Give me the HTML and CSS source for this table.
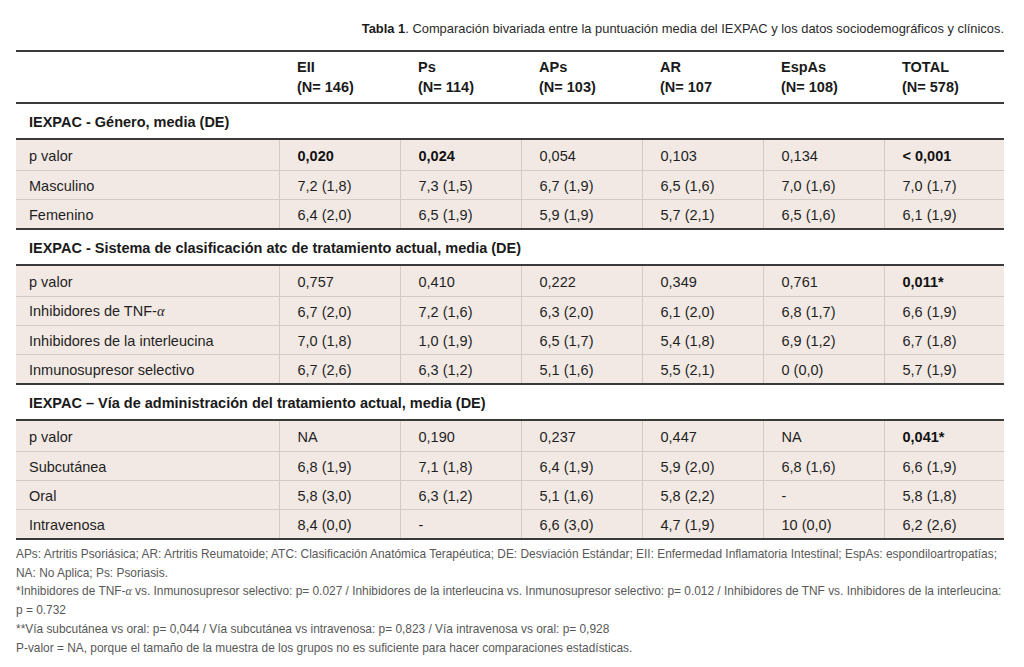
FILE: index.html
```html
<!DOCTYPE html>
<html lang="es">
<head>
<meta charset="utf-8">
<title>Tabla 1</title>
<link rel="stylesheet" href="styles.css">
</head>
<body>
<div class="page">
  <p class="caption"><b>Tabla 1</b>. Comparación bivariada entre la puntuación media del IEXPAC y los datos sociodemográficos y clínicos.</p>
  <table class="data">
    <colgroup>
      <col class="c-label">
      <col class="c-val"><col class="c-val"><col class="c-val"><col class="c-val"><col class="c-val"><col class="c-last">
    </colgroup>
    <thead>
      <tr>
        <th></th>
        <th>EII<br>(N= 146)</th>
        <th>Ps<br>(N= 114)</th>
        <th>APs<br>(N= 103)</th>
        <th>AR<br>(N= 107</th>
        <th>EspAs<br>(N= 108)</th>
        <th>TOTAL<br>(N= 578)</th>
      </tr>
    </thead>
    <tbody class="title">
      <tr><td colspan="7">IEXPAC - Género, media (DE)</td></tr>
    </tbody>
    <tbody class="block">
      <tr class="first"><td>p valor</td><td><b>0,020</b></td><td><b>0,024</b></td><td>0,054</td><td>0,103</td><td>0,134</td><td><b>&lt; 0,001</b></td></tr>
      <tr><td>Masculino</td><td>7,2 (1,8)</td><td>7,3 (1,5)</td><td>6,7 (1,9)</td><td>6,5 (1,6)</td><td>7,0 (1,6)</td><td>7,0 (1,7)</td></tr>
      <tr><td>Femenino</td><td>6,4 (2,0)</td><td>6,5 (1,9)</td><td>5,9 (1,9)</td><td>5,7 (2,1)</td><td>6,5 (1,6)</td><td>6,1 (1,9)</td></tr>
    </tbody>
    <tbody class="title">
      <tr><td colspan="7">IEXPAC - Sistema de clasificación atc de tratamiento actual, media (DE)</td></tr>
    </tbody>
    <tbody class="block">
      <tr class="first"><td>p valor</td><td>0,757</td><td>0,410</td><td>0,222</td><td>0,349</td><td>0,761</td><td><b>0,011*</b></td></tr>
      <tr><td>Inhibidores de TNF-<span class="greek">α</span></td><td>6,7 (2,0)</td><td>7,2 (1,6)</td><td>6,3 (2,0)</td><td>6,1 (2,0)</td><td>6,8 (1,7)</td><td>6,6 (1,9)</td></tr>
      <tr><td>Inhibidores de la interleucina</td><td>7,0 (1,8)</td><td>1,0 (1,9)</td><td>6,5 (1,7)</td><td>5,4 (1,8)</td><td>6,9 (1,2)</td><td>6,7 (1,8)</td></tr>
      <tr><td>Inmunosupresor selectivo</td><td>6,7 (2,6)</td><td>6,3 (1,2)</td><td>5,1 (1,6)</td><td>5,5 (2,1)</td><td>0 (0,0)</td><td>5,7 (1,9)</td></tr>
    </tbody>
    <tbody class="title">
      <tr><td colspan="7">IEXPAC – Vía de administración del tratamiento actual, media (DE)</td></tr>
    </tbody>
    <tbody class="block">
      <tr class="first"><td>p valor</td><td>NA</td><td>0,190</td><td>0,237</td><td>0,447</td><td>NA</td><td><b>0,041*</b></td></tr>
      <tr><td>Subcutánea</td><td>6,8 (1,9)</td><td>7,1 (1,8)</td><td>6,4 (1,9)</td><td>5,9 (2,0)</td><td>6,8 (1,6)</td><td>6,6 (1,9)</td></tr>
      <tr><td>Oral</td><td>5,8 (3,0)</td><td>6,3 (1,2)</td><td>5,1 (1,6)</td><td>5,8 (2,2)</td><td>-</td><td>5,8 (1,8)</td></tr>
      <tr><td>Intravenosa</td><td>8,4 (0,0)</td><td>-</td><td>6,6 (3,0)</td><td>4,7 (1,9)</td><td>10 (0,0)</td><td>6,2 (2,6)</td></tr>
    </tbody>
  </table>
  <div class="notes">
    <p>APs: Artritis Psoriásica; AR: Artritis Reumatoide; ATC: Clasificación Anatómica Terapéutica; DE: Desviación Estándar; EII: Enfermedad Inflamatoria Intestinal; EspAs: espondiloartropatías;<br>NA: No Aplica; Ps: Psoriasis.</p>
    <p>*Inhibidores de TNF-<span class="greek">α</span> vs. Inmunosupresor selectivo: p= 0.027 / Inhibidores de la interleucina vs. Inmunosupresor selectivo: p= 0.012 / Inhibidores de TNF vs. Inhibidores de la interleucina:<br>p = 0.732</p>
    <p>**Vía subcutánea vs oral: p= 0,044 / Vía subcutánea vs intravenosa: p= 0,823 / Vía intravenosa vs oral: p= 0,928</p>
    <p>P-valor = NA, porque el tamaño de la muestra de los grupos no es suficiente para hacer comparaciones estadísticas.</p>
  </div>
</div>
</body>
</html>
```
FILE: styles.css
```css
html, body {
  margin: 0;
  padding: 0;
  background: #ffffff;
}

body {
  font-family: "Liberation Sans", Arial, sans-serif;
  color: #1f1f1f;
}

.page {
  width: 988px;
  padding: 20px 20px 0 16px;
}

.caption {
  margin: 0 0 12px 0;
  text-align: right;
  font-size: 12.9px;
  line-height: 18px;
  color: #2a2a2a;
}

.caption b {
  font-weight: bold;
  color: #1a1a1a;
}

.data {
  width: 988px;
  border-collapse: collapse;
  table-layout: fixed;
  font-size: 14.5px;
}

.c-label { width: 263px; }
.c-val { width: 121px; }
.c-last { width: 120px; }

.data th,
.data td {
  text-align: left;
  padding: 0 0 0 18px;
  white-space: nowrap;
}

.data th:first-child,
.data td:first-child {
  padding-left: 13px;
}

.data thead tr {
  border-top: 2px solid #3a3a3a;
  border-bottom: 2px solid #3a3a3a;
}

.data thead th {
  font-weight: bold;
  line-height: 20px;
  padding-top: 5px;
  padding-bottom: 5px;
  vertical-align: top;
  color: #1a1a1a;
}

.title td {
  font-weight: bold;
  height: 33px;
  vertical-align: middle;
  padding-top: 1px;
  color: #1a1a1a;
}

.block {
  background: #f2e9e4;
  border-top: 2px solid #3a3a3a;
  border-bottom: 2px solid #3a3a3a;
}

.block tr {
  border-top: 1px solid #d3cac4;
}

.block tr.first {
  border-top: none;
}

.block td {
  height: 27px;
  padding-top: 1px;
  vertical-align: middle;
  border-left: 1px solid #d3cac4;
}

.block td:first-child {
  border-left: none;
}

.block tr.first td {
  height: 29px;
}

.block b {
  color: #111;
}

.greek {
  font-family: "Liberation Serif", "Times New Roman", serif;
  font-style: italic;
}

.notes {
  margin-top: 5px;
  font-size: 11.9px;
  line-height: 18.7px;
  color: #585858;
}

.notes p {
  margin: 0;
  white-space: nowrap;
}
```
